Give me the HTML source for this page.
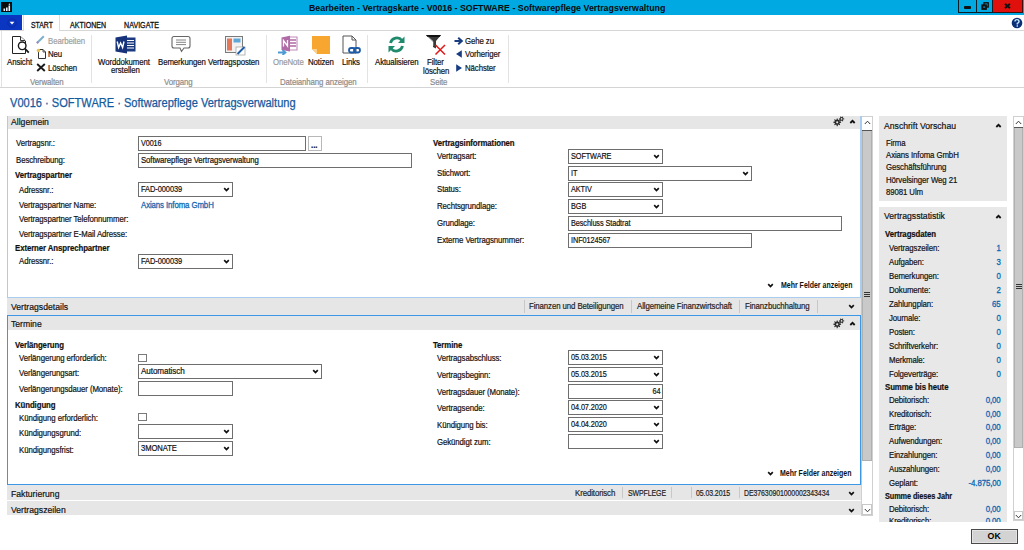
<!DOCTYPE html>
<html><head><meta charset="utf-8"><style>
html,body{margin:0;padding:0;width:1024px;height:550px;overflow:hidden;background:#fff;position:relative;font-family:"Liberation Sans",sans-serif}
.t{position:absolute;white-space:nowrap}
.r{position:absolute;display:block}
</style></head><body>
<div class="r" style="left:0px;top:0px;width:1024px;height:15px;background:#00a9e1"></div>
<div class="r" style="left:1px;top:2px;width:11px;height:10px;background:#0a0a0a"></div>
<svg class="r" style="left:1px;top:2px" width="11" height="10" viewBox="0 0 11 10"><rect x="2.5" y="6.5" width="1.6" height="2.5" fill="#e8f4ff"/><rect x="5" y="5.5" width="1.6" height="3.5" fill="#e8f4ff"/><rect x="7.5" y="3.5" width="1.6" height="5.5" fill="#e8f4ff"/><circle cx="8.4" cy="2.3" r="0.8" fill="#c8d8ff"/></svg>
<div class="t" style="left:308.50px;transform:scaleX(0.98);transform-origin:0 0;top:1.94px;font-size:9px;line-height:12px;color:#050a10;letter-spacing:0px;font-weight:bold;">Bearbeiten - Vertragskarte - V0016 - SOFTWARE - Softwarepflege Vertragsverwaltung</div>
<div class="r" style="left:958px;top:0px;width:35px;height:13px;background:#00a9e1;border:1px solid #101c24;border-top:none;box-sizing:border-box"></div>
<div class="r" style="left:976px;top:0px;width:1px;height:13px;background:#101c24"></div>
<div class="r" style="left:993px;top:0px;width:30px;height:13px;background:#e0100c;border-bottom:1px solid #3a1010;border-right:1px solid #3a1010;box-sizing:border-box"></div>
<div class="r" style="left:964px;top:6px;width:7px;height:2.5px;background:#111;border-radius:1px"></div>
<svg class="r" style="left:981px;top:2px" width="8" height="8" viewBox="0 0 8 8"><rect x="3" y="0.8" width="4.2" height="4.2" fill="none" stroke="#111" stroke-width="1.4"/><rect x="1" y="3" width="4.2" height="4.2" fill="#111" stroke="#111" stroke-width="1.4"/><rect x="2.4" y="4.4" width="1.4" height="1.4" fill="#00a9e1"/></svg>
<svg class="r" style="left:1004px;top:3px" width="7" height="6" viewBox="0 0 7 6"><path d="M1 0.8 L6 5.2 M6 0.8 L1 5.2" stroke="#111" stroke-width="1.9"/></svg>
<div class="r" style="left:0px;top:15px;width:1024px;height:16px;background:#fff"></div>
<div class="r" style="left:0px;top:30px;width:1024px;height:1px;background:#d6d6d6"></div>
<div class="r" style="left:0px;top:15px;width:22px;height:15px;background:#0b36c2"></div>
<svg class="r" style="left:6px;top:18px" width="12" height="10" viewBox="0 0 12 10"><circle cx="6" cy="5" r="4.2" fill="none" stroke="#0a2a9a" stroke-width="0.8"/><path d="M3.6 3.8 H8.4 L6 6.4 Z" fill="#fff"/></svg>
<div class="r" style="left:23px;top:15px;width:37px;height:16px;background:#fff;border:1px solid #dcdcdc;border-top:none;border-bottom:none;box-sizing:border-box"></div>
<div class="t" style="left:31.20px;transform:scaleX(0.8);transform-origin:0 0;top:19.99px;font-size:8.6px;line-height:11px;color:#111;letter-spacing:0px;-webkit-text-stroke:0.3px #111;">START</div>
<div class="t" style="left:70.00px;transform:scaleX(0.82);transform-origin:0 0;top:19.99px;font-size:8.6px;line-height:11px;color:#111;letter-spacing:0px;-webkit-text-stroke:0.3px #111;">AKTIONEN</div>
<div class="t" style="left:123.70px;transform:scaleX(0.83);transform-origin:0 0;top:19.99px;font-size:8.6px;line-height:11px;color:#111;letter-spacing:0px;-webkit-text-stroke:0.3px #111;">NAVIGATE</div>
<svg class="r" style="left:1011px;top:17px" width="12" height="12" viewBox="0 0 12 12"><circle cx="6" cy="6" r="5.3" fill="#0c2f78"/><path d="M4 4.6 Q4 2.6 6 2.6 Q8 2.6 8 4.4 Q8 5.5 6.3 6.3 L6.3 7.4" fill="none" stroke="#c4ecff" stroke-width="1.4"/><rect x="5.6" y="8.3" width="1.4" height="1.4" fill="#c4ecff"/></svg>
<div class="r" style="left:1px;top:31px;width:1023px;height:57px;background:#fff;border-left:1px solid #e2e2e2;border-right:1px solid #d4d4d4"></div>
<div class="r" style="left:0px;top:87px;width:1024px;height:1px;background:#d4d4d4"></div>
<div class="r" style="left:91px;top:35px;width:1px;height:48px;background:#e3e3e3"></div>
<div class="r" style="left:266px;top:35px;width:1px;height:48px;background:#e3e3e3"></div>
<div class="r" style="left:367px;top:35px;width:1px;height:48px;background:#e3e3e3"></div>
<div class="r" style="left:508px;top:35px;width:1px;height:48px;background:#e3e3e3"></div>
<svg class="r" style="left:11px;top:35px" width="20" height="20" viewBox="0 0 20 20"><path d="M1.5 1.5 H9.5 L14.5 6 V18.5 H1.5 Z" fill="#fff" stroke="#222" stroke-width="1"/><path d="M9.5 1.5 V5.5 H14" fill="#f4f4f4" stroke="#333" stroke-width="1"/><circle cx="11.2" cy="10.8" r="3.8" fill="#fff" stroke="#1a1a1a" stroke-width="1.4"/><path d="M13.9 13.6 L17.8 17.6" stroke="#1a1a1a" stroke-width="1.8"/></svg>
<div class="t" style="left:7.00px;transform:scaleX(0.9);transform-origin:0 0;top:57.03px;font-size:8.7px;line-height:11px;color:#111;letter-spacing:-0.1px;-webkit-text-stroke:0.2px #111;">Ansicht</div>
<svg class="r" style="left:36px;top:35px" width="9" height="9" viewBox="0 0 9 9"><path d="M1.5 7.5 L7.8 1.2" stroke="#7eb0c8" stroke-width="2"/><path d="M0.8 8.2 L2.2 6.8" stroke="#9a88c0" stroke-width="2"/></svg>
<div class="t" style="left:48.00px;transform:scaleX(0.9);transform-origin:0 0;top:35.53px;font-size:8.7px;line-height:11px;color:#a0a0a0;letter-spacing:-0.1px;-webkit-text-stroke:0.2px #a0a0a0;">Bearbeiten</div>
<svg class="r" style="left:36px;top:48px" width="11" height="11" viewBox="0 0 11 11"><path d="M2.5 1.5 H7 L9.5 4 V10.5 H2.5 Z" fill="#fff" stroke="#333" stroke-width="1"/><path d="M7 1.5 V4 H9.5" fill="none" stroke="#333" stroke-width="0.8"/><circle cx="2.5" cy="2.5" r="1.8" fill="#e8c050"/></svg>
<div class="t" style="left:48.00px;transform:scaleX(0.9);transform-origin:0 0;top:49.33px;font-size:8.7px;line-height:11px;color:#111;letter-spacing:-0.1px;-webkit-text-stroke:0.2px #111;">Neu</div>
<svg class="r" style="left:36px;top:63px" width="10" height="9" viewBox="0 0 10 9"><path d="M1.2 1 L8.8 8 M8.8 1 L1.2 8" stroke="#1a1a1a" stroke-width="1.9"/></svg>
<div class="t" style="left:48.00px;transform:scaleX(0.9);transform-origin:0 0;top:63.13px;font-size:8.7px;line-height:11px;color:#111;letter-spacing:-0.1px;-webkit-text-stroke:0.2px #111;">Löschen</div>
<div class="t" style="left:30.00px;transform:scaleX(0.9);transform-origin:0 0;top:76.53px;font-size:8.7px;line-height:11px;color:#8a8a8a;letter-spacing:-0.1px;-webkit-text-stroke:0.2px #8a8a8a;">Verwalten</div>
<svg class="r" style="left:115px;top:35px" width="21" height="19" viewBox="0 0 21 19"><rect x="8" y="2.5" width="12.5" height="14" fill="#1b3a80"/><path d="M10.5 5.5 H19 M10.5 8 H19 M10.5 10.5 H19 M10.5 13 H19" stroke="#fff" stroke-width="1"/><path d="M0.5 2.5 L12 0.5 V18.5 L0.5 16.5 Z" fill="#16327a"/><path d="M2.2 6.5 L3.6 12.5 L5.6 8 L7.6 12.5 L9 6.5" fill="none" stroke="#fff" stroke-width="1.4"/></svg>
<div class="t" style="left:98.00px;transform:scaleX(0.9);transform-origin:0 0;top:57.33px;font-size:8.7px;line-height:11px;color:#111;letter-spacing:-0.1px;-webkit-text-stroke:0.2px #111;">Worddokument</div>
<div class="t" style="left:111.00px;transform:scaleX(0.9);transform-origin:0 0;top:65.33px;font-size:8.7px;line-height:11px;color:#111;letter-spacing:-0.1px;-webkit-text-stroke:0.2px #111;">erstellen</div>
<svg class="r" style="left:171px;top:35px" width="20" height="18" viewBox="0 0 20 18"><path d="M3 1.5 H17 Q19 1.5 19 3.5 V11 Q19 13 17 13 H13 L10.5 16.5 L9 13 H3 Q1 13 1 11 V3.5 Q1 1.5 3 1.5 Z" fill="#fff" stroke="#666" stroke-width="1.1"/><path d="M5 5 H15 M5 7.3 H15 M5 9.6 H15" stroke="#777" stroke-width="0.9"/></svg>
<div class="t" style="left:157.70px;transform:scaleX(0.9);transform-origin:0 0;top:56.83px;font-size:8.7px;line-height:11px;color:#111;letter-spacing:-0.1px;-webkit-text-stroke:0.2px #111;">Bemerkungen</div>
<svg class="r" style="left:224px;top:35px" width="22" height="21" viewBox="0 0 22 21"><rect x="1.5" y="1.5" width="17" height="16" fill="#f2f2f2" stroke="#7a7a7a" stroke-width="1"/><rect x="3" y="3.5" width="5" height="12" fill="#e2775a"/><rect x="9.5" y="3.5" width="7" height="4" fill="#5fa8d6"/><rect x="12" y="12" width="9" height="8" fill="#fff" stroke="#999" stroke-width="0.7"/><path d="M13.5 19 L20.5 12" stroke="#1f5fa8" stroke-width="2"/></svg>
<div class="t" style="left:207.70px;transform:scaleX(0.9);transform-origin:0 0;top:56.83px;font-size:8.7px;line-height:11px;color:#111;letter-spacing:-0.1px;-webkit-text-stroke:0.2px #111;">Vertragsposten</div>
<div class="t" style="left:163.80px;transform:scaleX(0.9);transform-origin:0 0;top:76.53px;font-size:8.7px;line-height:11px;color:#8a8a8a;letter-spacing:-0.1px;-webkit-text-stroke:0.2px #8a8a8a;">Vorgang</div>
<svg class="r" style="left:276px;top:35px" width="22" height="20" viewBox="0 0 22 20"><path d="M12 2 H21 V15 H12 Z" fill="#fff" stroke="#c28ab8" stroke-width="1.1"/><path d="M14 5 H20 M14 8 H20 M14 11 H20" stroke="#b06aa6" stroke-width="1.4"/><path d="M5.5 2.5 L14 0.8 V16.5 L5.5 15 Z" fill="#b06aa6"/><path d="M7.5 11.5 V5.5 L11.5 11 V5" fill="none" stroke="#fff" stroke-width="1.3"/><path d="M2 17.5 H9 M6.5 15 L9.5 17.5 L6.5 20" fill="none" stroke="#4e9bd4" stroke-width="1.8"/></svg>
<div class="t" style="left:272.90px;transform:scaleX(0.9);transform-origin:0 0;top:57.03px;font-size:8.7px;line-height:11px;color:#9a9a9a;letter-spacing:-0.1px;-webkit-text-stroke:0.2px #9a9a9a;">OneNote</div>
<svg class="r" style="left:311px;top:35px" width="20" height="20" viewBox="0 0 20 20"><path d="M1 1 H19 V19 H6 L1 14 Z" fill="#f7a630"/><path d="M1 14 H6 V19 Z" fill="#fbd08a"/></svg>
<div class="t" style="left:308.00px;transform:scaleX(0.9);transform-origin:0 0;top:57.03px;font-size:8.7px;line-height:11px;color:#111;letter-spacing:-0.1px;-webkit-text-stroke:0.2px #111;">Notizen</div>
<svg class="r" style="left:342px;top:35px" width="20" height="20" viewBox="0 0 20 20"><path d="M1 1 H10 L14 5 V18 H1 Z" fill="#fff" stroke="#555" stroke-width="1"/><path d="M10 1 V5 H14" fill="none" stroke="#555" stroke-width="1"/><rect x="7" y="13" width="6" height="4.5" rx="2.2" fill="none" stroke="#1b5aa8" stroke-width="1.8"/><rect x="12" y="13" width="6" height="4.5" rx="2.2" fill="none" stroke="#1b5aa8" stroke-width="1.8"/></svg>
<div class="t" style="left:342.00px;transform:scaleX(0.9);transform-origin:0 0;top:57.03px;font-size:8.7px;line-height:11px;color:#111;letter-spacing:-0.1px;-webkit-text-stroke:0.2px #111;">Links</div>
<div class="t" style="left:280.00px;transform:scaleX(0.9);transform-origin:0 0;top:76.53px;font-size:8.7px;line-height:11px;color:#8a8a8a;letter-spacing:-0.1px;-webkit-text-stroke:0.2px #8a8a8a;">Dateianhang anzeigen</div>
<svg class="r" style="left:387px;top:35px" width="19" height="19" viewBox="0 0 19 19"><path d="M3.5 8 A6.5 6.5 0 0 1 15 5.5" fill="none" stroke="#1f8a6c" stroke-width="2.8"/><path d="M17.5 1.5 V8 H11 Z" fill="#1f8a6c"/><path d="M15.5 11 A6.5 6.5 0 0 1 4 13.5" fill="none" stroke="#1f8a6c" stroke-width="2.8"/><path d="M1.5 17.5 V11 H8 Z" fill="#1f8a6c"/></svg>
<div class="t" style="left:374.80px;transform:scaleX(0.9);transform-origin:0 0;top:57.03px;font-size:8.7px;line-height:11px;color:#111;letter-spacing:-0.1px;-webkit-text-stroke:0.2px #111;">Aktualisieren</div>
<svg class="r" style="left:425px;top:34px" width="22" height="22" viewBox="0 0 22 22"><path d="M1 1 H16 L11 7 V14.5 L8 13 V7 Z" fill="#3a3a3a"/><path d="M1 1 H16 L14.5 3 H2.5 Z" fill="#111"/><path d="M3 2.5 L8.5 8 V12" fill="none" stroke="#777" stroke-width="0.8"/><path d="M10.5 11 L20 20.5 M20 11 L10.5 20.5" stroke="#e01818" stroke-width="1.5"/></svg>
<div class="t" style="left:427.00px;transform:scaleX(0.9);transform-origin:0 0;top:57.03px;font-size:8.7px;line-height:11px;color:#111;letter-spacing:-0.1px;-webkit-text-stroke:0.2px #111;">Filter</div>
<div class="t" style="left:422.50px;transform:scaleX(0.9);transform-origin:0 0;top:66.03px;font-size:8.7px;line-height:11px;color:#111;letter-spacing:-0.1px;-webkit-text-stroke:0.2px #111;">löschen</div>
<svg class="r" style="left:454px;top:37px" width="10" height="8" viewBox="0 0 10 8"><path d="M0.5 4 H7.5 M4.2 0.8 L7.8 4 L4.2 7.2" fill="none" stroke="#173d80" stroke-width="2"/></svg>
<div class="t" style="left:464.70px;transform:scaleX(0.9);transform-origin:0 0;top:36.03px;font-size:8.7px;line-height:11px;color:#111;letter-spacing:-0.1px;-webkit-text-stroke:0.2px #111;">Gehe zu</div>
<svg class="r" style="left:455px;top:50px" width="8" height="8" viewBox="0 0 8 8"><path d="M6.8 0.3 V7.7 L1 4 Z" fill="#173d80"/></svg>
<div class="t" style="left:464.70px;transform:scaleX(0.9);transform-origin:0 0;top:49.13px;font-size:8.7px;line-height:11px;color:#111;letter-spacing:-0.1px;-webkit-text-stroke:0.2px #111;">Vorheriger</div>
<svg class="r" style="left:455px;top:64px" width="8" height="8" viewBox="0 0 8 8"><path d="M1.2 0.3 V7.7 L7 4 Z" fill="#173d80"/></svg>
<div class="t" style="left:464.70px;transform:scaleX(0.9);transform-origin:0 0;top:63.23px;font-size:8.7px;line-height:11px;color:#111;letter-spacing:-0.1px;-webkit-text-stroke:0.2px #111;">Nächster</div>
<div class="t" style="left:430.00px;transform:scaleX(0.9);transform-origin:0 0;top:76.53px;font-size:8.7px;line-height:11px;color:#8a8a8a;letter-spacing:-0.1px;-webkit-text-stroke:0.2px #8a8a8a;">Seite</div>
<div class="t" style="left:10.00px;transform:scaleX(0.9);transform-origin:0 0;top:94.70px;font-size:12.3px;line-height:16px;color:#145a9e;letter-spacing:0px;-webkit-text-stroke:0.25px #145a9e;">V0016 · SOFTWARE · Softwarepflege Vertragsverwaltung</div>
<div class="r" style="left:7px;top:116px;width:854px;height:182px;border:1px solid #a9cdee;border-top:none;box-sizing:border-box;background:#fff"></div>
<div class="r" style="left:8px;top:116px;width:852px;height:13px;background:#e6e6e6"></div>
<div class="t" style="left:10.80px;transform:scaleX(0.9);transform-origin:0 0;top:116.17px;font-size:9.6px;line-height:12px;color:#111;letter-spacing:0px;-webkit-text-stroke:0.2px #111;">Allgemein</div>
<svg class="r" style="left:833px;top:116px" width="12" height="11" viewBox="0 0 12 11"><path d="M8.08 5.87 L8.08 6.73 L6.70 7.03 L6.48 7.55 L7.24 8.74 L6.64 9.34 L5.45 8.58 L4.93 8.80 L4.63 10.18 L3.77 10.18 L3.47 8.80 L2.95 8.58 L1.76 9.34 L1.16 8.74 L1.92 7.55 L1.70 7.03 L0.32 6.73 L0.32 5.87 L1.70 5.57 L1.92 5.05 L1.16 3.86 L1.76 3.26 L2.95 4.02 L3.47 3.80 L3.77 2.42 L4.63 2.42 L4.93 3.80 L5.45 4.02 L6.64 3.26 L7.24 3.86 L6.48 5.05 L6.70 5.57 Z" fill="#2a2a2a"/><circle cx="4.2" cy="6.3" r="1.1" fill="#e6e6e6"/><path d="M11.27 2.51 L11.27 3.29 L10.27 3.56 L10.01 4.02 L10.28 5.02 L9.59 5.41 L8.86 4.68 L8.34 4.68 L7.61 5.41 L6.92 5.02 L7.19 4.02 L6.93 3.56 L5.93 3.29 L5.93 2.51 L6.93 2.24 L7.19 1.78 L6.92 0.78 L7.61 0.39 L8.34 1.12 L8.86 1.12 L9.59 0.39 L10.28 0.78 L10.01 1.78 L10.27 2.24 Z" fill="#3a3a3a"/><circle cx="8.6" cy="2.9" r="0.8" fill="#e6e6e6"/></svg>
<svg class="r" style="left:849px;top:119px" width="7" height="5" viewBox="0 0 7 5"><path d="M1.3 4 L3.5 1.8 L5.7 4" fill="none" stroke="#111" stroke-width="1.8"/></svg>
<div class="t" style="left:15.50px;transform:scaleX(0.9);transform-origin:0 0;top:137.83px;font-size:8.7px;line-height:11px;color:#111;letter-spacing:-0.1px;-webkit-text-stroke:0.2px #111;">Vertragsnr.:</div>
<div class="r" style="left:138px;top:136px;width:168px;height:15px;background:#fff;border:1px solid #6e6e6e;box-sizing:border-box"></div>
<div class="t" style="left:140.50px;transform:scaleX(0.83);transform-origin:0 0;top:137.83px;font-size:8.7px;line-height:11px;color:#111;letter-spacing:-0.1px;-webkit-text-stroke:0.2px #111;">V0016</div>
<div class="r" style="left:308px;top:136px;width:14px;height:15px;background:#fff;border:1px solid #b8b8b8;box-sizing:border-box"></div>
<div class="t" style="left:311.00px;transform:scaleX(0.9);transform-origin:0 0;top:140.33px;font-size:8.7px;line-height:11px;color:#111;letter-spacing:0px;font-weight:bold;-webkit-text-stroke:0.2px #111;">...</div>
<div class="t" style="left:15.50px;transform:scaleX(0.9);transform-origin:0 0;top:154.83px;font-size:8.7px;line-height:11px;color:#111;letter-spacing:-0.1px;-webkit-text-stroke:0.2px #111;">Beschreibung:</div>
<div class="r" style="left:138px;top:153px;width:274px;height:15px;background:#fff;border:1px solid #6e6e6e;box-sizing:border-box"></div>
<div class="t" style="left:140.50px;transform:scaleX(0.895);transform-origin:0 0;top:154.83px;font-size:8.7px;line-height:11px;color:#111;letter-spacing:-0.1px;-webkit-text-stroke:0.2px #111;">Softwarepflege Vertragsverwaltung</div>
<div class="t" style="left:14.90px;transform:scaleX(0.9);transform-origin:0 0;top:170.43px;font-size:8.7px;line-height:11px;color:#111;letter-spacing:-0.1px;font-weight:bold;-webkit-text-stroke:0.2px #111;">Vertragspartner</div>
<div class="t" style="left:18.70px;transform:scaleX(0.9);transform-origin:0 0;top:184.63px;font-size:8.7px;line-height:11px;color:#111;letter-spacing:-0.1px;-webkit-text-stroke:0.2px #111;">Adressnr.:</div>
<div class="r" style="left:138px;top:182px;width:95px;height:15px;background:#fff;border:1px solid #6e6e6e;box-sizing:border-box"></div>
<div class="t" style="left:140.50px;transform:scaleX(0.86);transform-origin:0 0;top:183.83px;font-size:8.7px;line-height:11px;color:#111;letter-spacing:-0.1px;-webkit-text-stroke:0.2px #111;">FAD-000039</div>
<svg class="r" style="left:223px;top:187px" width="7" height="5" viewBox="0 0 7 5"><path d="M1.2 1.2 L3.5 3.6 L5.8 1.2" fill="none" stroke="#111" stroke-width="1.7"/></svg>
<div class="t" style="left:18.70px;transform:scaleX(0.9);transform-origin:0 0;top:200.03px;font-size:8.7px;line-height:11px;color:#111;letter-spacing:-0.1px;-webkit-text-stroke:0.2px #111;">Vertragspartner Name:</div>
<div class="t" style="left:140.50px;transform:scaleX(0.9);transform-origin:0 0;top:200.03px;font-size:8.7px;line-height:11px;color:#0f68b0;letter-spacing:-0.1px;-webkit-text-stroke:0.3px #0f68b0;">Axians Infoma GmbH</div>
<div class="t" style="left:18.70px;transform:scaleX(0.9);transform-origin:0 0;top:213.63px;font-size:8.7px;line-height:11px;color:#111;letter-spacing:-0.1px;-webkit-text-stroke:0.2px #111;">Vertragspartner Telefonnummer:</div>
<div class="t" style="left:18.70px;transform:scaleX(0.9);transform-origin:0 0;top:228.53px;font-size:8.7px;line-height:11px;color:#111;letter-spacing:-0.1px;-webkit-text-stroke:0.2px #111;">Vertragspartner E-Mail Adresse:</div>
<div class="t" style="left:14.90px;transform:scaleX(0.9);transform-origin:0 0;top:242.83px;font-size:8.7px;line-height:11px;color:#111;letter-spacing:-0.1px;font-weight:bold;-webkit-text-stroke:0.2px #111;">Externer Ansprechpartner</div>
<div class="t" style="left:18.70px;transform:scaleX(0.9);transform-origin:0 0;top:256.33px;font-size:8.7px;line-height:11px;color:#111;letter-spacing:-0.1px;-webkit-text-stroke:0.2px #111;">Adressnr.:</div>
<div class="r" style="left:138px;top:254px;width:95px;height:15px;background:#fff;border:1px solid #6e6e6e;box-sizing:border-box"></div>
<div class="t" style="left:140.50px;transform:scaleX(0.86);transform-origin:0 0;top:255.83px;font-size:8.7px;line-height:11px;color:#111;letter-spacing:-0.1px;-webkit-text-stroke:0.2px #111;">FAD-000039</div>
<svg class="r" style="left:223px;top:259px" width="7" height="5" viewBox="0 0 7 5"><path d="M1.2 1.2 L3.5 3.6 L5.8 1.2" fill="none" stroke="#111" stroke-width="1.7"/></svg>
<div class="t" style="left:433.30px;transform:scaleX(0.9);transform-origin:0 0;top:138.33px;font-size:8.7px;line-height:11px;color:#111;letter-spacing:-0.1px;font-weight:bold;-webkit-text-stroke:0.2px #111;">Vertragsinformationen</div>
<div class="t" style="left:437.00px;transform:scaleX(0.9);transform-origin:0 0;top:150.53px;font-size:8.7px;line-height:11px;color:#111;letter-spacing:-0.1px;-webkit-text-stroke:0.2px #111;">Vertragsart:</div>
<div class="r" style="left:568px;top:149px;width:95px;height:15px;background:#fff;border:1px solid #6e6e6e;box-sizing:border-box"></div>
<div class="t" style="left:570.50px;transform:scaleX(0.84);transform-origin:0 0;top:150.83px;font-size:8.7px;line-height:11px;color:#111;letter-spacing:-0.1px;-webkit-text-stroke:0.2px #111;">SOFTWARE</div>
<svg class="r" style="left:653px;top:154px" width="7" height="5" viewBox="0 0 7 5"><path d="M1.2 1.2 L3.5 3.6 L5.8 1.2" fill="none" stroke="#111" stroke-width="1.7"/></svg>
<div class="t" style="left:437.00px;transform:scaleX(0.9);transform-origin:0 0;top:167.53px;font-size:8.7px;line-height:11px;color:#111;letter-spacing:-0.1px;-webkit-text-stroke:0.2px #111;">Stichwort:</div>
<div class="r" style="left:568px;top:166px;width:184px;height:15px;background:#fff;border:1px solid #6e6e6e;box-sizing:border-box"></div>
<div class="t" style="left:570.50px;transform:scaleX(0.84);transform-origin:0 0;top:167.83px;font-size:8.7px;line-height:11px;color:#111;letter-spacing:-0.1px;-webkit-text-stroke:0.2px #111;">IT</div>
<svg class="r" style="left:742px;top:171px" width="7" height="5" viewBox="0 0 7 5"><path d="M1.2 1.2 L3.5 3.6 L5.8 1.2" fill="none" stroke="#111" stroke-width="1.7"/></svg>
<div class="t" style="left:437.00px;transform:scaleX(0.9);transform-origin:0 0;top:183.53px;font-size:8.7px;line-height:11px;color:#111;letter-spacing:-0.1px;-webkit-text-stroke:0.2px #111;">Status:</div>
<div class="r" style="left:568px;top:182px;width:95px;height:15px;background:#fff;border:1px solid #6e6e6e;box-sizing:border-box"></div>
<div class="t" style="left:570.50px;transform:scaleX(0.84);transform-origin:0 0;top:183.83px;font-size:8.7px;line-height:11px;color:#111;letter-spacing:-0.1px;-webkit-text-stroke:0.2px #111;">AKTIV</div>
<svg class="r" style="left:653px;top:187px" width="7" height="5" viewBox="0 0 7 5"><path d="M1.2 1.2 L3.5 3.6 L5.8 1.2" fill="none" stroke="#111" stroke-width="1.7"/></svg>
<div class="t" style="left:437.00px;transform:scaleX(0.9);transform-origin:0 0;top:200.53px;font-size:8.7px;line-height:11px;color:#111;letter-spacing:-0.1px;-webkit-text-stroke:0.2px #111;">Rechtsgrundlage:</div>
<div class="r" style="left:568px;top:199px;width:95px;height:15px;background:#fff;border:1px solid #6e6e6e;box-sizing:border-box"></div>
<div class="t" style="left:570.50px;transform:scaleX(0.84);transform-origin:0 0;top:200.83px;font-size:8.7px;line-height:11px;color:#111;letter-spacing:-0.1px;-webkit-text-stroke:0.2px #111;">BGB</div>
<svg class="r" style="left:653px;top:204px" width="7" height="5" viewBox="0 0 7 5"><path d="M1.2 1.2 L3.5 3.6 L5.8 1.2" fill="none" stroke="#111" stroke-width="1.7"/></svg>
<div class="t" style="left:437.00px;transform:scaleX(0.9);transform-origin:0 0;top:217.53px;font-size:8.7px;line-height:11px;color:#111;letter-spacing:-0.1px;-webkit-text-stroke:0.2px #111;">Grundlage:</div>
<div class="r" style="left:568px;top:216px;width:274px;height:15px;background:#fff;border:1px solid #6e6e6e;box-sizing:border-box"></div>
<div class="t" style="left:570.50px;transform:scaleX(0.84);transform-origin:0 0;top:217.83px;font-size:8.7px;line-height:11px;color:#111;letter-spacing:-0.1px;-webkit-text-stroke:0.2px #111;">Beschluss Stadtrat</div>
<div class="t" style="left:437.00px;transform:scaleX(0.9);transform-origin:0 0;top:234.53px;font-size:8.7px;line-height:11px;color:#111;letter-spacing:-0.1px;-webkit-text-stroke:0.2px #111;">Externe Vertragsnummer:</div>
<div class="r" style="left:568px;top:233px;width:184px;height:15px;background:#fff;border:1px solid #6e6e6e;box-sizing:border-box"></div>
<div class="t" style="left:570.50px;transform:scaleX(0.84);transform-origin:0 0;top:234.83px;font-size:8.7px;line-height:11px;color:#111;letter-spacing:-0.1px;-webkit-text-stroke:0.2px #111;">INF0124567</div>
<svg class="r" style="left:767px;top:282.5px" width="7" height="5" viewBox="0 0 7 5"><path d="M1.2 1.2 L3.5 3.6 L5.8 1.2" fill="none" stroke="#111" stroke-width="1.7"/></svg>
<div class="t" style="left:780.60px;transform:scaleX(0.76);transform-origin:0 0;top:279.12px;font-size:9.2px;line-height:12px;color:#111;letter-spacing:0px;font-weight:bold;">Mehr Felder anzeigen</div>
<div class="r" style="left:7px;top:298px;width:854px;height:17px;background:#e6e6e6"></div>
<div class="t" style="left:10.80px;transform:scaleX(0.9);transform-origin:0 0;top:301.47px;font-size:9.6px;line-height:12px;color:#111;letter-spacing:0px;-webkit-text-stroke:0.2px #111;">Vertragsdetails</div>
<div class="r" style="left:524px;top:300px;width:1px;height:13px;background:#c8c8c8"></div>
<div class="r" style="left:631px;top:300px;width:1px;height:13px;background:#c8c8c8"></div>
<div class="r" style="left:739px;top:300px;width:1px;height:13px;background:#c8c8c8"></div>
<div class="r" style="left:817px;top:300px;width:1px;height:13px;background:#c8c8c8"></div>
<div class="t" style="left:529.00px;transform:scaleX(0.9);transform-origin:0 0;top:301.33px;font-size:8.7px;line-height:11px;color:#222;letter-spacing:-0.1px;-webkit-text-stroke:0.2px #222;">Finanzen und Beteiligungen</div>
<div class="t" style="left:636.60px;transform:scaleX(0.9);transform-origin:0 0;top:301.33px;font-size:8.7px;line-height:11px;color:#222;letter-spacing:-0.1px;-webkit-text-stroke:0.2px #222;">Allgemeine Finanzwirtschaft</div>
<div class="t" style="left:744.60px;transform:scaleX(0.9);transform-origin:0 0;top:301.33px;font-size:8.7px;line-height:11px;color:#222;letter-spacing:-0.1px;-webkit-text-stroke:0.2px #222;">Finanzbuchhaltung</div>
<svg class="r" style="left:848px;top:304px" width="7" height="5" viewBox="0 0 7 5"><path d="M1.2 1.2 L3.5 3.6 L5.8 1.2" fill="none" stroke="#111" stroke-width="1.7"/></svg>
<div class="r" style="left:7px;top:315px;width:854px;height:170px;border:1px solid #3c97e6;box-sizing:border-box;background:#fff"></div>
<div class="r" style="left:8px;top:316px;width:852px;height:14px;background:#e6e6e6"></div>
<div class="t" style="left:10.80px;transform:scaleX(0.9);transform-origin:0 0;top:317.97px;font-size:9.6px;line-height:12px;color:#111;letter-spacing:0px;-webkit-text-stroke:0.2px #111;">Termine</div>
<svg class="r" style="left:833px;top:318px" width="12" height="11" viewBox="0 0 12 11"><path d="M8.08 5.87 L8.08 6.73 L6.70 7.03 L6.48 7.55 L7.24 8.74 L6.64 9.34 L5.45 8.58 L4.93 8.80 L4.63 10.18 L3.77 10.18 L3.47 8.80 L2.95 8.58 L1.76 9.34 L1.16 8.74 L1.92 7.55 L1.70 7.03 L0.32 6.73 L0.32 5.87 L1.70 5.57 L1.92 5.05 L1.16 3.86 L1.76 3.26 L2.95 4.02 L3.47 3.80 L3.77 2.42 L4.63 2.42 L4.93 3.80 L5.45 4.02 L6.64 3.26 L7.24 3.86 L6.48 5.05 L6.70 5.57 Z" fill="#2a2a2a"/><circle cx="4.2" cy="6.3" r="1.1" fill="#e6e6e6"/><path d="M11.27 2.51 L11.27 3.29 L10.27 3.56 L10.01 4.02 L10.28 5.02 L9.59 5.41 L8.86 4.68 L8.34 4.68 L7.61 5.41 L6.92 5.02 L7.19 4.02 L6.93 3.56 L5.93 3.29 L5.93 2.51 L6.93 2.24 L7.19 1.78 L6.92 0.78 L7.61 0.39 L8.34 1.12 L8.86 1.12 L9.59 0.39 L10.28 0.78 L10.01 1.78 L10.27 2.24 Z" fill="#3a3a3a"/><circle cx="8.6" cy="2.9" r="0.8" fill="#e6e6e6"/></svg>
<svg class="r" style="left:849px;top:321px" width="7" height="5" viewBox="0 0 7 5"><path d="M1.3 4 L3.5 1.8 L5.7 4" fill="none" stroke="#111" stroke-width="1.8"/></svg>
<div class="t" style="left:15.00px;transform:scaleX(0.9);transform-origin:0 0;top:339.83px;font-size:8.7px;line-height:11px;color:#111;letter-spacing:-0.1px;font-weight:bold;-webkit-text-stroke:0.2px #111;">Verlängerung</div>
<div class="t" style="left:18.70px;transform:scaleX(0.9);transform-origin:0 0;top:352.53px;font-size:8.7px;line-height:11px;color:#111;letter-spacing:-0.1px;-webkit-text-stroke:0.2px #111;">Verlängerung erforderlich:</div>
<div class="r" style="left:138px;top:354px;width:9px;height:8px;background:#fff;border:1px solid #7a7a7a;box-sizing:border-box"></div>
<div class="t" style="left:18.70px;transform:scaleX(0.9);transform-origin:0 0;top:367.53px;font-size:8.7px;line-height:11px;color:#111;letter-spacing:-0.1px;-webkit-text-stroke:0.2px #111;">Verlängerungsart:</div>
<div class="r" style="left:138px;top:364px;width:184px;height:15px;background:#fff;border:1px solid #6e6e6e;box-sizing:border-box"></div>
<div class="t" style="left:140.50px;transform:scaleX(0.935);transform-origin:0 0;top:365.83px;font-size:8.7px;line-height:11px;color:#111;letter-spacing:-0.1px;-webkit-text-stroke:0.2px #111;">Automatisch</div>
<svg class="r" style="left:312px;top:369px" width="7" height="5" viewBox="0 0 7 5"><path d="M1.2 1.2 L3.5 3.6 L5.8 1.2" fill="none" stroke="#111" stroke-width="1.7"/></svg>
<div class="t" style="left:18.70px;transform:scaleX(0.9);transform-origin:0 0;top:384.03px;font-size:8.7px;line-height:11px;color:#111;letter-spacing:-0.1px;-webkit-text-stroke:0.2px #111;">Verlängerungsdauer (Monate):</div>
<div class="r" style="left:138px;top:381px;width:95px;height:15px;background:#fff;border:1px solid #6e6e6e;box-sizing:border-box"></div>
<div class="t" style="left:15.00px;transform:scaleX(0.9);transform-origin:0 0;top:399.83px;font-size:8.7px;line-height:11px;color:#111;letter-spacing:-0.1px;font-weight:bold;-webkit-text-stroke:0.2px #111;">Kündigung</div>
<div class="t" style="left:18.70px;transform:scaleX(0.9);transform-origin:0 0;top:412.83px;font-size:8.7px;line-height:11px;color:#111;letter-spacing:-0.1px;-webkit-text-stroke:0.2px #111;">Kündigung erforderlich:</div>
<div class="r" style="left:138px;top:413px;width:9px;height:8px;background:#fff;border:1px solid #7a7a7a;box-sizing:border-box"></div>
<div class="t" style="left:18.70px;transform:scaleX(0.9);transform-origin:0 0;top:427.53px;font-size:8.7px;line-height:11px;color:#111;letter-spacing:-0.1px;-webkit-text-stroke:0.2px #111;">Kündigungsgrund:</div>
<div class="r" style="left:138px;top:424px;width:95px;height:15px;background:#fff;border:1px solid #6e6e6e;box-sizing:border-box"></div>
<svg class="r" style="left:223px;top:429px" width="7" height="5" viewBox="0 0 7 5"><path d="M1.2 1.2 L3.5 3.6 L5.8 1.2" fill="none" stroke="#111" stroke-width="1.7"/></svg>
<div class="t" style="left:18.70px;transform:scaleX(0.9);transform-origin:0 0;top:444.53px;font-size:8.7px;line-height:11px;color:#111;letter-spacing:-0.1px;-webkit-text-stroke:0.2px #111;">Kündigungsfrist:</div>
<div class="r" style="left:138px;top:441px;width:95px;height:15px;background:#fff;border:1px solid #6e6e6e;box-sizing:border-box"></div>
<div class="t" style="left:140.50px;transform:scaleX(0.88);transform-origin:0 0;top:442.83px;font-size:8.7px;line-height:11px;color:#111;letter-spacing:-0.1px;-webkit-text-stroke:0.2px #111;">3MONATE</div>
<svg class="r" style="left:223px;top:446px" width="7" height="5" viewBox="0 0 7 5"><path d="M1.2 1.2 L3.5 3.6 L5.8 1.2" fill="none" stroke="#111" stroke-width="1.7"/></svg>
<div class="t" style="left:432.70px;transform:scaleX(0.9);transform-origin:0 0;top:339.83px;font-size:8.7px;line-height:11px;color:#111;letter-spacing:-0.1px;font-weight:bold;-webkit-text-stroke:0.2px #111;">Termine</div>
<div class="t" style="left:436.50px;transform:scaleX(0.9);transform-origin:0 0;top:352.73px;font-size:8.7px;line-height:11px;color:#111;letter-spacing:-0.1px;-webkit-text-stroke:0.2px #111;">Vertragsabschluss:</div>
<div class="r" style="left:568px;top:350px;width:95px;height:15px;background:#fff;border:1px solid #6e6e6e;box-sizing:border-box"></div>
<div class="t" style="left:570.50px;transform:scaleX(0.84);transform-origin:0 0;top:351.83px;font-size:8.7px;line-height:11px;color:#111;letter-spacing:-0.1px;-webkit-text-stroke:0.2px #111;">05.03.2015</div>
<svg class="r" style="left:653px;top:355px" width="7" height="5" viewBox="0 0 7 5"><path d="M1.2 1.2 L3.5 3.6 L5.8 1.2" fill="none" stroke="#111" stroke-width="1.7"/></svg>
<div class="t" style="left:436.50px;transform:scaleX(0.9);transform-origin:0 0;top:369.73px;font-size:8.7px;line-height:11px;color:#111;letter-spacing:-0.1px;-webkit-text-stroke:0.2px #111;">Vertragsbeginn:</div>
<div class="r" style="left:568px;top:367px;width:95px;height:15px;background:#fff;border:1px solid #6e6e6e;box-sizing:border-box"></div>
<div class="t" style="left:570.50px;transform:scaleX(0.84);transform-origin:0 0;top:368.83px;font-size:8.7px;line-height:11px;color:#111;letter-spacing:-0.1px;-webkit-text-stroke:0.2px #111;">05.03.2015</div>
<svg class="r" style="left:653px;top:372px" width="7" height="5" viewBox="0 0 7 5"><path d="M1.2 1.2 L3.5 3.6 L5.8 1.2" fill="none" stroke="#111" stroke-width="1.7"/></svg>
<div class="t" style="left:436.50px;transform:scaleX(0.9);transform-origin:0 0;top:386.73px;font-size:8.7px;line-height:11px;color:#111;letter-spacing:-0.1px;-webkit-text-stroke:0.2px #111;">Vertragsdauer (Monate):</div>
<div class="r" style="left:568px;top:384px;width:95px;height:15px;background:#fff;border:1px solid #6e6e6e;box-sizing:border-box"></div>
<div class="t" style="right:364.00px;text-align:right;transform:scaleX(0.84);transform-origin:100% 0;top:385.83px;font-size:8.7px;line-height:11px;color:#111;letter-spacing:-0.1px;-webkit-text-stroke:0.2px #111;">64</div>
<div class="t" style="left:436.50px;transform:scaleX(0.9);transform-origin:0 0;top:402.73px;font-size:8.7px;line-height:11px;color:#111;letter-spacing:-0.1px;-webkit-text-stroke:0.2px #111;">Vertragsende:</div>
<div class="r" style="left:568px;top:400px;width:95px;height:15px;background:#fff;border:1px solid #6e6e6e;box-sizing:border-box"></div>
<div class="t" style="left:570.50px;transform:scaleX(0.84);transform-origin:0 0;top:401.83px;font-size:8.7px;line-height:11px;color:#111;letter-spacing:-0.1px;-webkit-text-stroke:0.2px #111;">04.07.2020</div>
<svg class="r" style="left:653px;top:405px" width="7" height="5" viewBox="0 0 7 5"><path d="M1.2 1.2 L3.5 3.6 L5.8 1.2" fill="none" stroke="#111" stroke-width="1.7"/></svg>
<div class="t" style="left:436.50px;transform:scaleX(0.9);transform-origin:0 0;top:419.73px;font-size:8.7px;line-height:11px;color:#111;letter-spacing:-0.1px;-webkit-text-stroke:0.2px #111;">Kündigung bis:</div>
<div class="r" style="left:568px;top:417px;width:95px;height:15px;background:#fff;border:1px solid #6e6e6e;box-sizing:border-box"></div>
<div class="t" style="left:570.50px;transform:scaleX(0.84);transform-origin:0 0;top:418.83px;font-size:8.7px;line-height:11px;color:#111;letter-spacing:-0.1px;-webkit-text-stroke:0.2px #111;">04.04.2020</div>
<svg class="r" style="left:653px;top:422px" width="7" height="5" viewBox="0 0 7 5"><path d="M1.2 1.2 L3.5 3.6 L5.8 1.2" fill="none" stroke="#111" stroke-width="1.7"/></svg>
<div class="t" style="left:436.50px;transform:scaleX(0.9);transform-origin:0 0;top:436.73px;font-size:8.7px;line-height:11px;color:#111;letter-spacing:-0.1px;-webkit-text-stroke:0.2px #111;">Gekündigt zum:</div>
<div class="r" style="left:568px;top:434px;width:95px;height:15px;background:#fff;border:1px solid #6e6e6e;box-sizing:border-box"></div>
<svg class="r" style="left:653px;top:439px" width="7" height="5" viewBox="0 0 7 5"><path d="M1.2 1.2 L3.5 3.6 L5.8 1.2" fill="none" stroke="#111" stroke-width="1.7"/></svg>
<svg class="r" style="left:767px;top:470.5px" width="7" height="5" viewBox="0 0 7 5"><path d="M1.2 1.2 L3.5 3.6 L5.8 1.2" fill="none" stroke="#111" stroke-width="1.7"/></svg>
<div class="t" style="left:779.70px;transform:scaleX(0.76);transform-origin:0 0;top:467.12px;font-size:9.2px;line-height:12px;color:#111;letter-spacing:0px;font-weight:bold;">Mehr Felder anzeigen</div>
<div class="r" style="left:7px;top:485px;width:854px;height:15px;background:#e6e6e6"></div>
<div class="t" style="left:10.80px;transform:scaleX(0.9);transform-origin:0 0;top:487.67px;font-size:9.6px;line-height:12px;color:#111;letter-spacing:0px;-webkit-text-stroke:0.2px #111;">Fakturierung</div>
<div class="r" style="left:622px;top:487px;width:1px;height:11px;background:#c8c8c8"></div>
<div class="r" style="left:671px;top:487px;width:1px;height:11px;background:#c8c8c8"></div>
<div class="r" style="left:691px;top:487px;width:1px;height:11px;background:#c8c8c8"></div>
<div class="r" style="left:739px;top:487px;width:1px;height:11px;background:#c8c8c8"></div>
<div class="t" style="left:575.00px;transform:scaleX(0.9);transform-origin:0 0;top:487.63px;font-size:8.7px;line-height:11px;color:#222;letter-spacing:-0.1px;-webkit-text-stroke:0.2px #222;">Kreditorisch</div>
<div class="t" style="left:628.00px;transform:scaleX(0.8);transform-origin:0 0;top:487.63px;font-size:8.7px;line-height:11px;color:#222;letter-spacing:-0.1px;-webkit-text-stroke:0.2px #222;">SWPFLEGE</div>
<div class="t" style="left:696.00px;transform:scaleX(0.8);transform-origin:0 0;top:487.63px;font-size:8.7px;line-height:11px;color:#222;letter-spacing:-0.1px;-webkit-text-stroke:0.2px #222;">05.03.2015</div>
<div class="t" style="left:744.00px;transform:scaleX(0.8);transform-origin:0 0;top:487.63px;font-size:8.7px;line-height:11px;color:#222;letter-spacing:-0.1px;-webkit-text-stroke:0.2px #222;">DE37630901000002343434</div>
<svg class="r" style="left:848px;top:491px" width="7" height="5" viewBox="0 0 7 5"><path d="M1.2 1.2 L3.5 3.6 L5.8 1.2" fill="none" stroke="#111" stroke-width="1.7"/></svg>
<div class="r" style="left:7px;top:501px;width:854px;height:14px;background:#e6e6e6"></div>
<div class="t" style="left:10.80px;transform:scaleX(0.9);transform-origin:0 0;top:504.47px;font-size:9.6px;line-height:12px;color:#111;letter-spacing:0px;-webkit-text-stroke:0.2px #111;">Vertragszeilen</div>
<svg class="r" style="left:848px;top:508px" width="7" height="5" viewBox="0 0 7 5"><path d="M1.2 1.2 L3.5 3.6 L5.8 1.2" fill="none" stroke="#111" stroke-width="1.7"/></svg>
<div class="r" style="left:861px;top:116px;width:12px;height:400px;background:#fff;border:1px solid #d0d0d0;box-sizing:border-box"></div>
<div class="r" style="left:861px;top:116px;width:1px;height:369px;background:#a9cdee"></div>
<div class="r" style="left:862px;top:130px;width:10px;height:331px;background:#c9c9c9;border:1px solid #b0b0b0;box-sizing:border-box"></div>
<div class="r" style="left:862px;top:130px;width:10px;height:1px;background:#555"></div>
<svg class="r" style="left:863.5px;top:120px" width="7" height="5" viewBox="0 0 7 5"><path d="M0.8 4 L3.5 1.2 L6.2 4" fill="none" stroke="#333" stroke-width="1"/></svg>
<svg class="r" style="left:864px;top:292px" width="6" height="6" viewBox="0 0 6 6"><path d="M0 0.5 H6 M0 2.5 H6 M0 4.5 H6" stroke="#333" stroke-width="1"/></svg>
<div class="r" style="left:862px;top:504px;width:10px;height:11px;background:#fff;border:1px solid #c8c8c8;box-sizing:border-box"></div>
<svg class="r" style="left:863.5px;top:508px" width="7" height="5" viewBox="0 0 7 5"><path d="M0.8 1 L3.5 3.8 L6.2 1" fill="none" stroke="#333" stroke-width="1"/></svg>
<div class="r" style="left:879px;top:116px;width:128px;height:85px;background:#e8e8e8"></div>
<div class="t" style="left:884.00px;transform:scaleX(0.9);transform-origin:0 0;top:119.67px;font-size:9.6px;line-height:12px;color:#111;letter-spacing:0px;-webkit-text-stroke:0.2px #111;">Anschrift Vorschau</div>
<svg class="r" style="left:994.5px;top:123px" width="7" height="5" viewBox="0 0 7 5"><path d="M1.3 4 L3.5 1.8 L5.7 4" fill="none" stroke="#111" stroke-width="1.8"/></svg>
<div class="t" style="left:885.60px;transform:scaleX(0.9);transform-origin:0 0;top:137.83px;font-size:8.7px;line-height:11px;color:#111;letter-spacing:-0.1px;-webkit-text-stroke:0.2px #111;">Firma</div>
<div class="t" style="left:885.60px;transform:scaleX(0.9);transform-origin:0 0;top:150.08px;font-size:8.7px;line-height:11px;color:#111;letter-spacing:-0.1px;-webkit-text-stroke:0.2px #111;">Axians Infoma GmbH</div>
<div class="t" style="left:885.60px;transform:scaleX(0.9);transform-origin:0 0;top:162.33px;font-size:8.7px;line-height:11px;color:#111;letter-spacing:-0.1px;-webkit-text-stroke:0.2px #111;">Geschäftsführung</div>
<div class="t" style="left:885.60px;transform:scaleX(0.9);transform-origin:0 0;top:174.58px;font-size:8.7px;line-height:11px;color:#111;letter-spacing:-0.1px;-webkit-text-stroke:0.2px #111;">Hörvelsinger Weg 21</div>
<div class="t" style="left:885.60px;transform:scaleX(0.9);transform-origin:0 0;top:186.83px;font-size:8.7px;line-height:11px;color:#111;letter-spacing:-0.1px;-webkit-text-stroke:0.2px #111;">89081 Ulm</div>
<div class="r" style="left:879px;top:207px;width:128px;height:315px;background:#e8e8e8;overflow:hidden"></div>
<div class="t" style="left:884.00px;transform:scaleX(0.9);transform-origin:0 0;top:209.67px;font-size:9.6px;line-height:12px;color:#111;letter-spacing:0px;-webkit-text-stroke:0.2px #111;">Vertragsstatistik</div>
<svg class="r" style="left:994.5px;top:214px" width="7" height="5" viewBox="0 0 7 5"><path d="M1.3 4 L3.5 1.8 L5.7 4" fill="none" stroke="#111" stroke-width="1.8"/></svg>
<div class="t" style="left:885.00px;transform:scaleX(0.9);transform-origin:0 0;top:228.83px;font-size:8.7px;line-height:11px;color:#111;letter-spacing:-0.1px;font-weight:bold;-webkit-text-stroke:0.2px #111;">Vertragsdaten</div>
<div class="t" style="left:888.60px;transform:scaleX(0.9);transform-origin:0 0;top:242.93px;font-size:8.7px;line-height:11px;color:#111;letter-spacing:-0.1px;-webkit-text-stroke:0.2px #111;">Vertragszeilen:</div>
<div class="t" style="right:23.00px;text-align:right;transform:scaleX(0.9);transform-origin:100% 0;top:242.93px;font-size:8.7px;line-height:11px;color:#0a68b4;letter-spacing:0px;-webkit-text-stroke:0.3px #0a68b4;">1</div>
<div class="t" style="left:888.60px;transform:scaleX(0.9);transform-origin:0 0;top:256.93px;font-size:8.7px;line-height:11px;color:#111;letter-spacing:-0.1px;-webkit-text-stroke:0.2px #111;">Aufgaben:</div>
<div class="t" style="right:23.00px;text-align:right;transform:scaleX(0.9);transform-origin:100% 0;top:256.93px;font-size:8.7px;line-height:11px;color:#0a68b4;letter-spacing:0px;-webkit-text-stroke:0.3px #0a68b4;">3</div>
<div class="t" style="left:888.60px;transform:scaleX(0.9);transform-origin:0 0;top:270.93px;font-size:8.7px;line-height:11px;color:#111;letter-spacing:-0.1px;-webkit-text-stroke:0.2px #111;">Bemerkungen:</div>
<div class="t" style="right:23.00px;text-align:right;transform:scaleX(0.9);transform-origin:100% 0;top:270.93px;font-size:8.7px;line-height:11px;color:#0a68b4;letter-spacing:0px;-webkit-text-stroke:0.3px #0a68b4;">0</div>
<div class="t" style="left:888.60px;transform:scaleX(0.9);transform-origin:0 0;top:284.93px;font-size:8.7px;line-height:11px;color:#111;letter-spacing:-0.1px;-webkit-text-stroke:0.2px #111;">Dokumente:</div>
<div class="t" style="right:23.00px;text-align:right;transform:scaleX(0.9);transform-origin:100% 0;top:284.93px;font-size:8.7px;line-height:11px;color:#0a68b4;letter-spacing:0px;-webkit-text-stroke:0.3px #0a68b4;">2</div>
<div class="t" style="left:888.60px;transform:scaleX(0.9);transform-origin:0 0;top:298.93px;font-size:8.7px;line-height:11px;color:#111;letter-spacing:-0.1px;-webkit-text-stroke:0.2px #111;">Zahlungplan:</div>
<div class="t" style="right:23.00px;text-align:right;transform:scaleX(0.9);transform-origin:100% 0;top:298.93px;font-size:8.7px;line-height:11px;color:#0a68b4;letter-spacing:0px;-webkit-text-stroke:0.3px #0a68b4;">65</div>
<div class="t" style="left:888.60px;transform:scaleX(0.9);transform-origin:0 0;top:312.93px;font-size:8.7px;line-height:11px;color:#111;letter-spacing:-0.1px;-webkit-text-stroke:0.2px #111;">Journale:</div>
<div class="t" style="right:23.00px;text-align:right;transform:scaleX(0.9);transform-origin:100% 0;top:312.93px;font-size:8.7px;line-height:11px;color:#0a68b4;letter-spacing:0px;-webkit-text-stroke:0.3px #0a68b4;">0</div>
<div class="t" style="left:888.60px;transform:scaleX(0.9);transform-origin:0 0;top:326.93px;font-size:8.7px;line-height:11px;color:#111;letter-spacing:-0.1px;-webkit-text-stroke:0.2px #111;">Posten:</div>
<div class="t" style="right:23.00px;text-align:right;transform:scaleX(0.9);transform-origin:100% 0;top:326.93px;font-size:8.7px;line-height:11px;color:#0a68b4;letter-spacing:0px;-webkit-text-stroke:0.3px #0a68b4;">0</div>
<div class="t" style="left:888.60px;transform:scaleX(0.9);transform-origin:0 0;top:340.93px;font-size:8.7px;line-height:11px;color:#111;letter-spacing:-0.1px;-webkit-text-stroke:0.2px #111;">Schriftverkehr:</div>
<div class="t" style="right:23.00px;text-align:right;transform:scaleX(0.9);transform-origin:100% 0;top:340.93px;font-size:8.7px;line-height:11px;color:#0a68b4;letter-spacing:0px;-webkit-text-stroke:0.3px #0a68b4;">0</div>
<div class="t" style="left:888.60px;transform:scaleX(0.9);transform-origin:0 0;top:354.93px;font-size:8.7px;line-height:11px;color:#111;letter-spacing:-0.1px;-webkit-text-stroke:0.2px #111;">Merkmale:</div>
<div class="t" style="right:23.00px;text-align:right;transform:scaleX(0.9);transform-origin:100% 0;top:354.93px;font-size:8.7px;line-height:11px;color:#0a68b4;letter-spacing:0px;-webkit-text-stroke:0.3px #0a68b4;">0</div>
<div class="t" style="left:888.60px;transform:scaleX(0.9);transform-origin:0 0;top:368.93px;font-size:8.7px;line-height:11px;color:#111;letter-spacing:-0.1px;-webkit-text-stroke:0.2px #111;">Folgeverträge:</div>
<div class="t" style="right:23.00px;text-align:right;transform:scaleX(0.9);transform-origin:100% 0;top:368.93px;font-size:8.7px;line-height:11px;color:#0a68b4;letter-spacing:0px;-webkit-text-stroke:0.3px #0a68b4;">0</div>
<div class="t" style="left:885.00px;transform:scaleX(0.9);transform-origin:0 0;top:381.53px;font-size:8.7px;line-height:11px;color:#111;letter-spacing:-0.1px;font-weight:bold;-webkit-text-stroke:0.2px #111;">Summe bis heute</div>
<div class="t" style="left:888.60px;transform:scaleX(0.9);transform-origin:0 0;top:394.83px;font-size:8.7px;line-height:11px;color:#111;letter-spacing:-0.1px;-webkit-text-stroke:0.2px #111;">Debitorisch:</div>
<div class="t" style="right:23.00px;text-align:right;transform:scaleX(0.9);transform-origin:100% 0;top:394.83px;font-size:8.7px;line-height:11px;color:#0a68b4;letter-spacing:-0.1px;-webkit-text-stroke:0.3px #0a68b4;">0,00</div>
<div class="t" style="left:888.60px;transform:scaleX(0.9);transform-origin:0 0;top:408.66px;font-size:8.7px;line-height:11px;color:#111;letter-spacing:-0.1px;-webkit-text-stroke:0.2px #111;">Kreditorisch:</div>
<div class="t" style="right:23.00px;text-align:right;transform:scaleX(0.9);transform-origin:100% 0;top:408.66px;font-size:8.7px;line-height:11px;color:#0a68b4;letter-spacing:-0.1px;-webkit-text-stroke:0.3px #0a68b4;">0,00</div>
<div class="t" style="left:888.60px;transform:scaleX(0.9);transform-origin:0 0;top:422.49px;font-size:8.7px;line-height:11px;color:#111;letter-spacing:-0.1px;-webkit-text-stroke:0.2px #111;">Erträge:</div>
<div class="t" style="right:23.00px;text-align:right;transform:scaleX(0.9);transform-origin:100% 0;top:422.49px;font-size:8.7px;line-height:11px;color:#0a68b4;letter-spacing:-0.1px;-webkit-text-stroke:0.3px #0a68b4;">0,00</div>
<div class="t" style="left:888.60px;transform:scaleX(0.9);transform-origin:0 0;top:436.32px;font-size:8.7px;line-height:11px;color:#111;letter-spacing:-0.1px;-webkit-text-stroke:0.2px #111;">Aufwendungen:</div>
<div class="t" style="right:23.00px;text-align:right;transform:scaleX(0.9);transform-origin:100% 0;top:436.32px;font-size:8.7px;line-height:11px;color:#0a68b4;letter-spacing:-0.1px;-webkit-text-stroke:0.3px #0a68b4;">0,00</div>
<div class="t" style="left:888.60px;transform:scaleX(0.9);transform-origin:0 0;top:450.15px;font-size:8.7px;line-height:11px;color:#111;letter-spacing:-0.1px;-webkit-text-stroke:0.2px #111;">Einzahlungen:</div>
<div class="t" style="right:23.00px;text-align:right;transform:scaleX(0.9);transform-origin:100% 0;top:450.15px;font-size:8.7px;line-height:11px;color:#0a68b4;letter-spacing:-0.1px;-webkit-text-stroke:0.3px #0a68b4;">0,00</div>
<div class="t" style="left:888.60px;transform:scaleX(0.9);transform-origin:0 0;top:463.98px;font-size:8.7px;line-height:11px;color:#111;letter-spacing:-0.1px;-webkit-text-stroke:0.2px #111;">Auszahlungen:</div>
<div class="t" style="right:23.00px;text-align:right;transform:scaleX(0.9);transform-origin:100% 0;top:463.98px;font-size:8.7px;line-height:11px;color:#0a68b4;letter-spacing:-0.1px;-webkit-text-stroke:0.3px #0a68b4;">0,00</div>
<div class="t" style="left:888.60px;transform:scaleX(0.9);transform-origin:0 0;top:477.81px;font-size:8.7px;line-height:11px;color:#111;letter-spacing:-0.1px;-webkit-text-stroke:0.2px #111;">Geplant:</div>
<div class="t" style="right:23.00px;text-align:right;transform:scaleX(0.9);transform-origin:100% 0;top:477.81px;font-size:8.7px;line-height:11px;color:#0a68b4;letter-spacing:-0.1px;-webkit-text-stroke:0.3px #0a68b4;">-4.875,00</div>
<div class="t" style="left:885.00px;transform:scaleX(0.84);transform-origin:0 0;top:491.03px;font-size:8.7px;line-height:11px;color:#111;letter-spacing:-0.1px;font-weight:bold;-webkit-text-stroke:0.2px #111;">Summe dieses Jahr</div>
<div class="t" style="left:888.60px;transform:scaleX(0.9);transform-origin:0 0;top:503.73px;font-size:8.7px;line-height:11px;color:#111;letter-spacing:-0.1px;-webkit-text-stroke:0.2px #111;">Debitorisch:</div>
<div class="t" style="right:23.00px;text-align:right;transform:scaleX(0.9);transform-origin:100% 0;top:503.73px;font-size:8.7px;line-height:11px;color:#0a68b4;letter-spacing:-0.1px;-webkit-text-stroke:0.3px #0a68b4;">0,00</div>
<div class="t" style="left:888.60px;transform:scaleX(0.9);transform-origin:0 0;top:516.43px;font-size:8.7px;line-height:11px;color:#111;letter-spacing:-0.1px;-webkit-text-stroke:0.2px #111;">Kreditorisch:</div>
<div class="t" style="right:23.00px;text-align:right;transform:scaleX(0.9);transform-origin:100% 0;top:516.43px;font-size:8.7px;line-height:11px;color:#0a68b4;letter-spacing:-0.1px;-webkit-text-stroke:0.3px #0a68b4;">0,00</div>
<div class="r" style="left:876px;top:522px;width:134px;height:6px;background:#fff"></div>
<div class="r" style="left:1013px;top:116px;width:11px;height:405px;background:#fff;border:1px solid #d0d0d0;box-sizing:border-box"></div>
<div class="r" style="left:1014px;top:127px;width:9px;height:321px;background:#c9c9c9;border:1px solid #b0b0b0;box-sizing:border-box"></div>
<div class="r" style="left:1014px;top:127px;width:9px;height:1px;background:#555"></div>
<svg class="r" style="left:1015px;top:119.5px" width="7" height="5" viewBox="0 0 7 5"><path d="M0.8 4 L3.5 1.2 L6.2 4" fill="none" stroke="#333" stroke-width="1"/></svg>
<svg class="r" style="left:1016px;top:284px" width="6" height="6" viewBox="0 0 6 6"><path d="M0 0.5 H6 M0 2.5 H6 M0 4.5 H6" stroke="#333" stroke-width="1"/></svg>
<div class="r" style="left:1014px;top:511px;width:9px;height:9px;background:#fff;border:1px solid #c8c8c8;box-sizing:border-box"></div>
<svg class="r" style="left:1015px;top:514px" width="7" height="5" viewBox="0 0 7 5"><path d="M0.8 1 L3.5 3.8 L6.2 1" fill="none" stroke="#333" stroke-width="1"/></svg>
<div class="r" style="left:971px;top:529px;width:47px;height:15px;background:#d3d3d3;border:1px solid #4a4a4a;box-shadow:inset 0 0 0 1px #e4e4e4;box-sizing:border-box"></div>
<div class="t" style="left:894.30px;width:200px;text-align:center;transform:scaleX(1);transform-origin:50% 0;top:531.37px;font-size:8.8px;line-height:11px;color:#000;letter-spacing:0.2px;font-weight:bold;">OK</div>
</body></html>
